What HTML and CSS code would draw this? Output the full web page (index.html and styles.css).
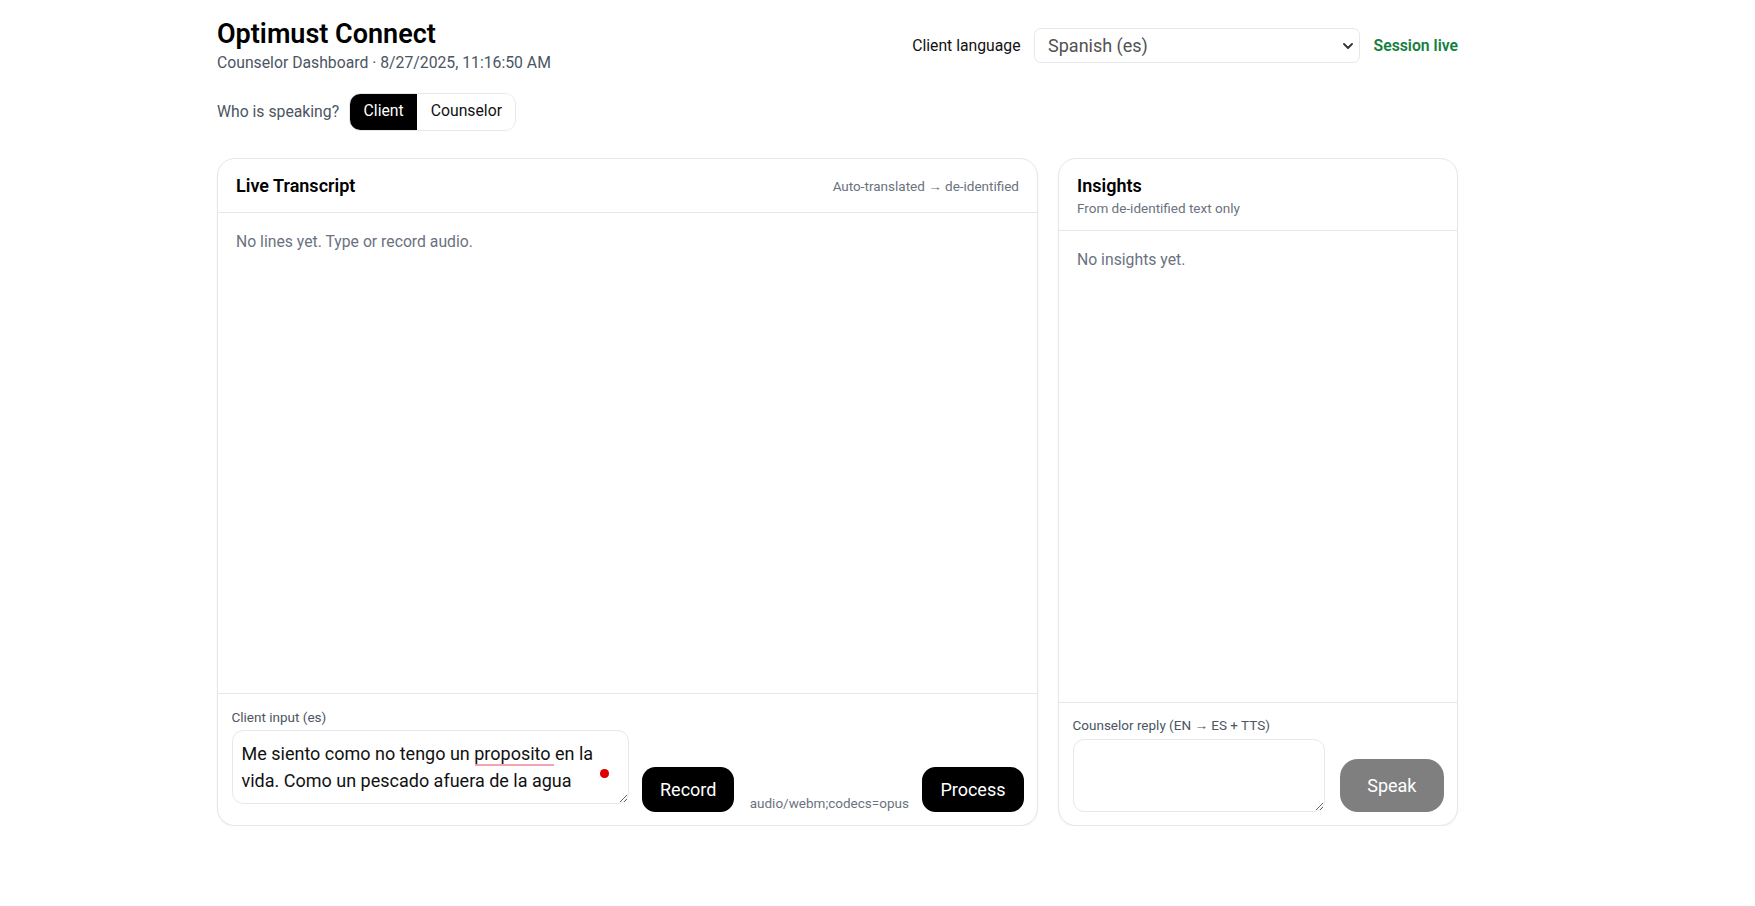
FILE: index.html
```html
<!DOCTYPE html>
<html lang="en">
<head>
  <meta charset="UTF-8">
  <meta name="viewport" content="width=device-width, initial-scale=1.0">
  <title>Optimust Connect - Counselor Dashboard</title>
  <link rel="stylesheet" href="styles.css">
</head>
<body>
  <div class="page">
    <header class="topbar">
      <div class="brand">
        <h1 class="brand__title">Optimust Connect</h1>
        <p class="brand__sub">Counselor Dashboard · 8/27/2025, 11:16:50 AM</p>
      </div>
      <div class="session">
        <label class="session__label" for="lang">Client language</label>
        <div class="select">
          <select id="lang" class="select__input">
            <option>Spanish (es)</option>
            <option>Portuguese (pt)</option>
            <option>French (fr)</option>
          </select>
          <svg class="select__arrow" viewBox="0 0 10 6" width="10" height="6" aria-hidden="true">
            <path d="M1 1l4 4 4-4" fill="none" stroke="#333" stroke-width="1.8" stroke-linecap="round" stroke-linejoin="round"/>
          </svg>
        </div>
        <span class="session__status">Session live</span>
      </div>
    </header>

    <div class="speaker">
      <span class="speaker__label">Who is speaking?</span>
      <div class="toggle" role="group">
        <button class="toggle__btn is-active">Client</button>
        <button class="toggle__btn">Counselor</button>
      </div>
    </div>

    <main class="board">
      <!-- transcript -->
      <section class="card">
        <div class="card__head">
          <h2 class="card__title">Live Transcript</h2>
          <span class="card__meta">Auto-translated → de-identified</span>
        </div>
        <div class="card__body">
          <p class="empty">No lines yet. Type or record audio.</p>
        </div>
        <div class="card__foot composer">
          <div class="composer__field">
            <label class="field-label" for="client-input">Client input (es)</label>
            <div class="textarea-wrap">
              <textarea id="client-input" class="textarea" rows="2">Me siento como no tengo un proposito en la vida. Como un pescado afuera de la agua</textarea>
              <span class="spell-mark" aria-hidden="true"></span>
              <span class="rec-dot"></span>
            </div>
          </div>
          <button class="btn">Record</button>
          <div class="composer__end">
            <span class="mime">audio/webm;codecs=opus</span>
            <button class="btn">Process</button>
          </div>
        </div>
      </section>

      <!-- insights -->
      <aside class="card">
        <div class="card__head card__head--stack">
          <h2 class="card__title">Insights</h2>
          <span class="card__sub">From de-identified text only</span>
        </div>
        <div class="card__body">
          <p class="empty">No insights yet.</p>
        </div>
        <div class="card__foot">
          <label class="field-label" for="reply">Counselor reply (EN → ES + TTS)</label>
          <div class="reply">
            <textarea id="reply" class="textarea reply__input" rows="2"></textarea>
            <button class="btn btn--speak" disabled>Speak</button>
          </div>
        </div>
      </aside>
    </main>
  </div>
</body>
</html>
```

FILE: styles.css
```css
body {
  margin: 0;
  background: #fff;
  color: #111;
  font-family: "Segoe UI", Roboto, sans-serif;
}

.page {
  width: 1241px;
  margin-left: 217px;
  padding-top: 16px;
}

/* header */
.topbar {
  display: flex;
  align-items: center;
  justify-content: space-between;
}
.brand__title {
  margin: 0;
  font-size: 27px;
  line-height: 36px;
  font-weight: 600;
  color: #000;
}
.brand__sub {
  margin: 0;
  font-size: 15.75px;
  line-height: 22.5px;
  color: #4b5563;
}
.session {
  display: flex;
  align-items: center;
}
.session__label {
  font-size: 15.75px;
  color: #111;
  margin-right: 13px;
}
.select {
  position: relative;
  width: 326px;
  height: 35px;
  margin-right: 14px;
}
.select__input {
  appearance: none;
  -webkit-appearance: none;
  width: 100%;
  height: 100%;
  padding: 0 36px 0 13.5px;
  border: 1px solid #e5e7eb;
  border-radius: 6.75px;
  background: #fff;
  color: #525252;
  font: inherit;
  font-size: 18px;
}
.select__arrow {
  position: absolute;
  right: 7px;
  top: 15px;
  pointer-events: none;
}
.session__status {
  font-size: 15.75px;
  font-weight: 600;
  color: #15803d;
}

/* speaker toggle */
.speaker {
  display: flex;
  align-items: center;
  gap: 10px;
  margin-top: 18px;
}
.speaker__label {
  font-size: 15.75px;
  color: #4b5563;
}
.toggle {
  display: inline-flex;
  border: 1px solid #e5e7eb;
  border-radius: 11.25px;
  overflow: hidden;
}
.toggle__btn {
  padding: 6.75px 13.5px;
  border: 0;
  background: #fff;
  color: #111;
  font: inherit;
  font-size: 15.75px;
  line-height: 22.5px;
}
.toggle__btn.is-active {
  background: #000;
  color: #fff;
}

/* cards */
.board {
  display: grid;
  grid-template-columns: 1fr 400px;
  gap: 20px;
  height: 668px;
  margin-top: 27.5px;
}
.card {
  display: flex;
  flex-direction: column;
  background: #fff;
  border: 1px solid #e5e7eb;
  border-radius: 18px;
  box-shadow: 0 1px 2px rgba(0, 0, 0, 0.06);
  overflow: hidden;
}
.card__head {
  display: flex;
  align-items: center;
  justify-content: space-between;
  padding: 13px 18px;
  border-bottom: 1px solid #e5e7eb;
}
.card__head--stack {
  flex-direction: column;
  align-items: flex-start;
}
.card__title {
  margin: 0;
  font-size: 18px;
  line-height: 27px;
  font-weight: 600;
  color: #000;
}
.card__meta,
.card__sub {
  font-size: 13.5px;
  line-height: 18px;
  color: #6b7280;
}
.card__body {
  flex: 1;
  padding: 18px;
}
.empty {
  margin: 0;
  font-size: 15.75px;
  line-height: 22.5px;
  color: #6b7280;
}
.card__foot {
  padding: 13.5px;
  border-top: 1px solid #e5e7eb;
}

.field-label {
  display: block;
  margin-bottom: 4.5px;
  font-size: 13.5px;
  line-height: 18px;
  color: #4b5563;
}
.textarea {
  display: block;
  box-sizing: border-box;
  width: 100%;
  padding: 9px;
  border: 1px solid #e5e7eb;
  border-radius: 11.25px;
  font: inherit;
  font-size: 18px;
  line-height: 27px;
  color: #111;
  background: #fff;
}

/* composer row */
.composer {
  display: flex;
  align-items: flex-end;
  gap: 13.5px;
}
.composer__field {
  flex-shrink: 0;
  width: 397px;
}
.composer .textarea {
  margin-bottom: 7.5px;
}
.textarea-wrap {
  position: relative;
}
.spell-mark {
  position: absolute;
  left: 243px;
  top: 34px;
  width: 79px;
  height: 1.5px;
  background: #f3a3b3;
  pointer-events: none;
}
.rec-dot {
  position: absolute;
  right: 20px;
  top: 39px;
  width: 8.5px;
  height: 8.5px;
  border-radius: 50%;
  background: #e00000;
}
.composer__end {
  display: flex;
  align-items: flex-end;
  gap: 13.5px;
  margin-left: auto;
}
.mime {
  font-size: 13.5px;
  line-height: 18px;
  color: #6b7280;
}

.btn {
  padding: 9px 18px;
  border: 0;
  border-radius: 13.5px;
  background: #000;
  color: #fff;
  font: inherit;
  font-size: 18px;
  line-height: 27px;
  white-space: nowrap;
}
.btn:disabled {
  opacity: 0.5;
}
.btn--speak {
  padding: 12.75px 27px;
  border-radius: 18px;
}

.reply {
  display: flex;
  align-items: flex-end;
  gap: 15px;
}
.reply__input {
  flex: 1;
  height: 73px;
}
```
